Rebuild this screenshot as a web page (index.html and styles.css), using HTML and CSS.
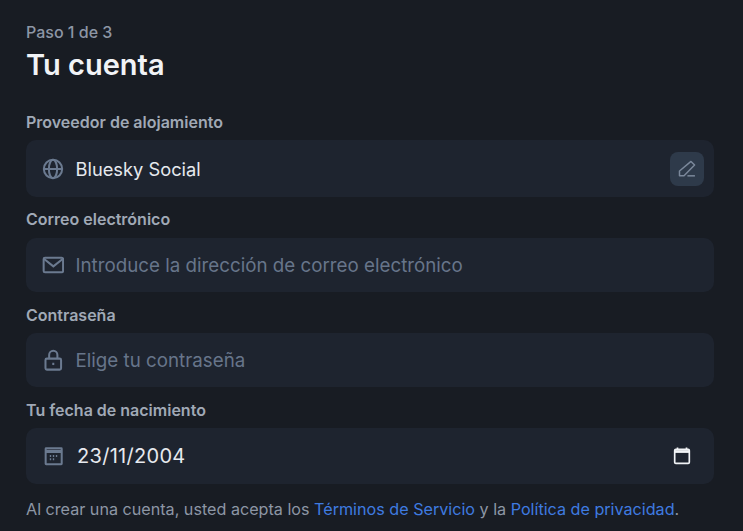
FILE: index.html
```html
<!DOCTYPE html>
<html lang="es">
<head>
  <meta charset="UTF-8">
  <title>Tu cuenta</title>
  <link rel="stylesheet" href="styles.css">
</head>
<body>
  <div class="step">Paso 1 de 3</div>
  <h1>Tu cuenta</h1>

  <div class="form__label form__label--first">Proveedor de alojamiento</div>
  <div class="field field--provider">
    <svg class="field__icon" viewBox="0 0 24 24"><circle cx="12" cy="12" r="10"/><path d="M2 12h20"/><ellipse cx="12" cy="12" rx="4.500" ry="10"/></svg>
    <span class="field__value">Bluesky Social</span>
    <button class="edit-btn"><svg viewBox="0 0 24 24"><path d="M16.800 2.900l4.300 4.300L8.400 20H3v-5.600z"/><path d="M12.500 20.200h9"/></svg></button>
  </div>

  <div class="form__label form__label--tight">Correo electrónico</div>
  <div class="field">
    <svg class="field__icon" viewBox="0 0 24 24"><rect x="1.800" y="4" width="21.200" height="16" rx="1.500"/><path d="M2.300 5.500l10.100 8 10.100-8"/></svg>
    <span class="field__placeholder">Introduce la dirección de correo electrónico</span>
  </div>

  <div class="form__label">Contraseña</div>
  <div class="field">
    <svg class="field__icon" viewBox="0 0 24 24"><rect x="3.800" y="10.500" width="17" height="12" rx="1.500"/><path d="M7.800 10.500V6.500a4.500 4.500 0 0 1 9 0v4"/><path d="M12.300 15v2.500"/></svg>
    <span class="field__placeholder">Elige tu contraseña</span>
  </div>

  <div class="form__label">Tu fecha de nacimiento</div>
  <div class="field field--date">
    <svg class="field__icon" viewBox="0 0 24 24"><rect x="4" y="3.500" width="17.500" height="17.500" rx="0.500"/><path d="M4 7h17.500" class="cal__head"/><path d="M8.500 12h1.500M11.800 12h1.500M15.100 12h1.500M8.500 15.500h1.500M11.800 15.500h1.500"/></svg>
    <span class="field__value field__value--date">23/11/2004</span>
    <svg class="date-picker" viewBox="0 0 16 16"><path d="M4 0.500v2M12 0.500v2"/><rect x="1.500" y="2" width="13" height="12.500" rx="1"/><path d="M1.500 4h13" class="date-picker__head"/></svg>
  </div>

  <p class="terms">Al crear una cuenta, usted acepta los <a href="#">Términos de Servicio</a> y la <a href="#">Política de privacidad</a>.</p>
</body>
</html>
```

FILE: styles.css
```css
html, body {
  height: 100%;
}
body {
  margin: 0;
  padding: 23px 29px 0 26px;
  box-sizing: border-box;
  overflow: hidden;
  font-family: Inter, "Noto Sans", sans-serif;
  background-color: #181c23;
}
.step {
  font-size: 16px;
  line-height: 18px;
  font-weight: 500;
  color: #8d96a5;
}
h1 {
  margin: 6px 0 0;
  font-size: 29px;
  line-height: 36px;
  font-weight: 600;
  color: #f1f3f6;
}
.form__label {
  margin: 14px 0 9px;
  font-size: 16px;
  line-height: 18px;
  font-weight: 600;
  color: #a0a9b6;
}
.form__label--first {
  margin-top: 30px;
}
.form__label--tight {
  margin: 13px 0 10px;
}
.field {
  display: flex;
  align-items: center;
  height: 54px;
  padding: 0 10px 0 16px;
  border-radius: 10px;
  background-color: #1e242f;
}
.field--provider {
  height: 57px;
}
.field--date {
  height: 56px;
}
.field__icon {
  flex: none;
  width: 22px;
  height: 22px;
  margin-right: 11.500px;
  fill: none;
  stroke: #6b7a90;
  stroke-width: 2.200;
}
.cal__head {
  stroke-width: 3.500;
}
.field__value {
  font-size: 18.300px;
  color: #e6e9ee;
}
.field__value--date {
  margin-left: 1.500px;
  font-size: 20px;
  letter-spacing: 0.3px;
}
.field__placeholder {
  font-size: 18.750px;
  color: #67758a;
}
.edit-btn {
  display: flex;
  align-items: center;
  justify-content: center;
  width: 34px;
  height: 34px;
  margin-left: auto;
  padding: 0;
  border: none;
  border-radius: 8px;
  background-color: #2e3a4a;
}
.edit-btn svg {
  width: 20px;
  height: 20px;
  fill: none;
  stroke: #7b889b;
  stroke-width: 1.800;
  stroke-linejoin: round;
}
.date-picker {
  width: 18px;
  height: 18px;
  margin-left: auto;
  margin-right: 13px;
  fill: none;
  stroke: #f1f3f6;
  stroke-width: 1.500;
}
.date-picker__head {
  stroke-width: 2.500;
}
.terms {
  margin: 15px 0 0;
  font-size: 16.150px;
  line-height: 20px;
  color: #8d96a5;
}
.terms a {
  color: #3f7be0;
  text-decoration: none;
}
```
